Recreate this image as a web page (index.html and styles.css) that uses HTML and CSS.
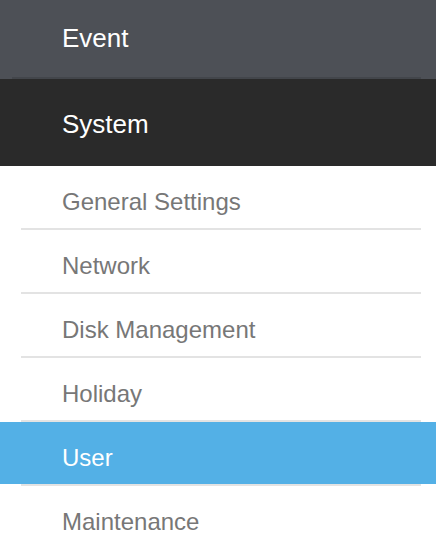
FILE: index.html
```html
<!DOCTYPE html>
<html>
<head>
<meta charset="utf-8">
<link rel="stylesheet" href="styles.css">
</head>
<body>
<nav class="menu">
  <div class="group group-event">
    <div class="group-title">Event</div>
    <div class="group-rule"></div>
  </div>
  <div class="group group-system">
    <div class="group-title">System</div>
  </div>
  <ul class="submenu">
    <li class="sub"><a class="sub-link">General Settings</a></li>
    <li class="sub"><a class="sub-link">Network</a></li>
    <li class="sub"><a class="sub-link">Disk Management</a></li>
    <li class="sub"><a class="sub-link">Holiday</a></li>
    <li class="sub active"><a class="sub-link">User</a></li>
    <li class="sub"><a class="sub-link">Maintenance</a></li>
  </ul>
</nav>
</body>
</html>
```
FILE: styles.css
```css
html, body {
  margin: 0;
  padding: 0;
  background: #ffffff;
}
body {
  font-family: "Liberation Sans", Arial, Helvetica, sans-serif;
  width: 436px;
  height: 552px;
  overflow: hidden;
}
.menu {
  display: flex;
  flex-direction: column;
}
.group-title {
  color: #ffffff;
  font-size: 26px;
  line-height: 30px;
  padding-left: 62px;
}
.group-event {
  background: #4d5056;
  height: 79px;
  box-sizing: border-box;
  padding-top: 23px;
  display: flex;
  flex-direction: column;
}
.group-rule {
  margin-top: auto;
  height: 2px;
  margin-left: 12px;
  margin-right: 15px;
  background: #43464b;
}
.group-system {
  background: #2a2a2a;
  height: 87px;
  box-sizing: border-box;
  padding-top: 30px;
}
.submenu {
  list-style: none;
  margin: 0;
  padding: 0;
}
.sub::after {
  content: "";
  display: block;
  height: 2px;
  margin: 0 15px 0 21px;
  background: #e3e3e3;
}
.sub:last-child::after {
  display: none;
}
.sub-link {
  display: block;
  height: 62px;
  box-sizing: border-box;
  padding: 22px 0 0 62px;
  font-size: 24px;
  line-height: 28px;
  color: #777777;
}
.sub.active .sub-link {
  background: #53b0e6;
  color: #ffffff;
}
```
